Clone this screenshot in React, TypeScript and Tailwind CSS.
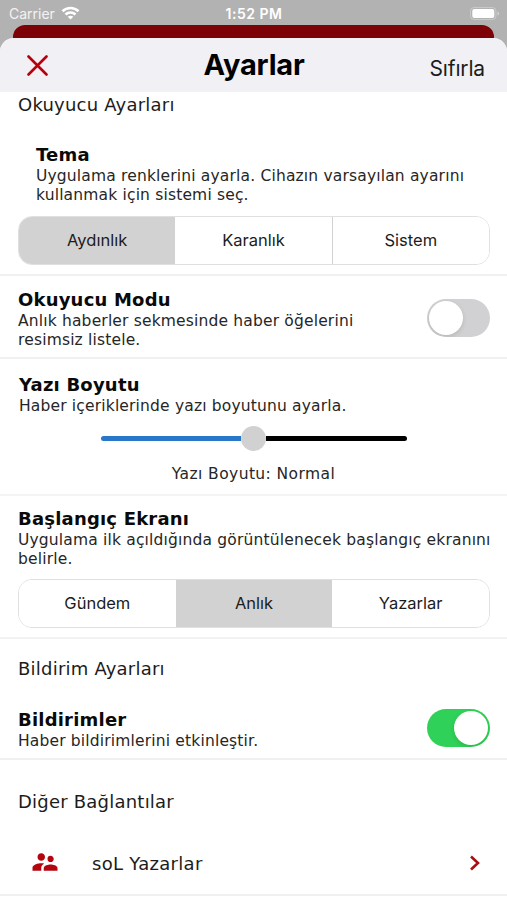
import React from "react";
import { MdSupervisorAccount } from "react-icons/md";

interface SegmentedProps {
  options: string[];
  selected: number;
}

function StatusBar() {
  return (
    <div className="flex h-[25px] items-center pt-[3px] text-white font-['Inter',sans-serif]">
      <div className="flex flex-1 items-center gap-[6px] pl-[9px]">
        <span className="text-[14px] leading-4 text-[#f2f2f2]">Carrier</span>
        <svg width="19" height="14" viewBox="0 0 18 14" fill="none" stroke="currentColor" strokeWidth="2.6" className="mb-[2px]">
          <path d="M1 5.2C5.5 0.9 12.5 0.9 17 5.2" />
          <path d="M4 8.5C6.8 5.8 11.2 5.8 14 8.5" />
          <path d="M6.2 10.7C7.8 9.3 10.2 9.3 11.8 10.7L9 13.6Z" fill="currentColor" stroke="none" />
        </svg>
      </div>
      <span className="mr-px text-[14px] font-semibold leading-4 tracking-[0.5px]">1:52 PM</span>
      <div className="flex flex-1 justify-end pb-[2px] pr-[7px]">
        <svg width="30" height="13" viewBox="0 0 30 13">
          <rect x="0.5" y="0.5" width="25.5" height="12" rx="3.5" fill="none" stroke="#fff" strokeOpacity="0.3" />
          <rect x="2.3" y="2" width="22" height="9" rx="2" fill="#fff" />
          <path d="M27.5 4.5v4c1-.3 1.700-1 1.700-2s-.7-1.700-1.700-2z" fill="#fff" fillOpacity="0.4" />
        </svg>
      </div>
    </div>
  );
}

function Segmented({ options, selected }: SegmentedProps) {
  return (
    <div className="flex h-[49px] w-[472px] overflow-hidden rounded-[14px] border border-[#e0e0e0] font-['Inter',sans-serif]">
      {options.map((option, index) => (
        <button
          key={option}
          className={
            "flex-1 text-[16.5px] text-[#1c1c1c] " +
            (index === selected ? "bg-[#d2d2d2]" : "bg-white") +
            (index > 0 && index - 1 !== selected && index !== selected ? " border-l border-[#d2d2d2]" : "")
          }
        >
          {option}
        </button>
      ))}
    </div>
  );
}

function Toggle({ on }: { on: boolean }) {
  return (
    <div
      className={
        "flex h-[38px] w-[63px] items-center overflow-hidden rounded-full px-[2px] " +
        (on ? "justify-end bg-[#30d158]" : "justify-start bg-[#d1d1d3]")
      }
    >
      <div className="size-[34px] rounded-full bg-white shadow-[0_2px_5px_rgba(0,0,0,0.12)]" />
    </div>
  );
}

function Title({ children }: { children: React.ReactNode }) {
  return (
    <h2 className="whitespace-nowrap text-[18px] font-bold leading-[22px] tracking-[0.2px] text-[#0a0a0a]">{children}</h2>
  );
}

function Description({ lines }: { lines: string[] }) {
  return (
    <p className="whitespace-nowrap pt-px text-[15.5px] leading-[19px] tracking-[0.17px] text-[#262626]">
      {lines.map((line) => (
        <span key={line} className="block">
          {line}
        </span>
      ))}
    </p>
  );
}

function Heading({ children }: { children: React.ReactNode }) {
  return (
    <h3 className="whitespace-nowrap text-[18px] leading-[22px] tracking-[0.22px] text-[#1c1c1c]">{children}</h3>
  );
}

export default function App() {
  return (
    <div className="h-[900px] w-[507px] overflow-hidden bg-[#b2b2b2] font-['DejaVu_Sans',sans-serif]">
      <StatusBar />
      {/* card of the screen behind the sheet */}
      <div className="mx-[13px] h-[13px] rounded-t-[12px] bg-[#7c0207]" />
      <div className="overflow-hidden rounded-t-[14px] bg-white">
        <header className="flex h-[54px] items-center bg-[#f1f0f5] font-['Inter',sans-serif]">
          <div className="flex-1 pl-[27px]">
            <svg width="21" height="21" viewBox="0 0 21 21" stroke="#b8000b" strokeWidth="2.6" strokeLinecap="round">
              <path d="M1.500 1.500 19.500 19.500M19.500 1.500 1.500 19.500" />
            </svg>
          </div>
          <h1 className="mr-[4px] text-[29px] font-bold leading-8 tracking-[-0.2px] text-black">Ayarlar</h1>
          <div className="flex-1 pr-[22px] pt-[8px] text-right text-[21px] leading-6 tracking-[-0.15px] text-[#1c1c1c]">
            Sıfırla
          </div>
        </header>

        <section className="h-[184px] border-b-2 border-[#f0f0f0] px-[18px] pt-[2px]">
          <Heading>Okuyucu Ayarları</Heading>
          <div className="mb-[11px] mt-[28px] pl-[18px]">
            <Title>Tema</Title>
            <Description lines={["Uygulama renklerini ayarla. Cihazın varsayılan ayarını", "kullanmak için sistemi seç."]} />
          </div>
          <Segmented options={["Aydınlık", "Karanlık", "Sistem"]} selected={0} />
        </section>

        <section className="flex h-[83px] justify-between border-b-2 border-[#f0f0f0] pl-[18px] pr-[17px]">
          <div className="pt-[13px]">
            <Title>Okuyucu Modu</Title>
            <Description lines={["Anlık haberler sekmesinde haber öğelerini", "resimsiz listele."]} />
          </div>
          <div className="pt-[23px]">
            <Toggle on={false} />
          </div>
        </section>

        <section className="h-[137px] border-b-2 border-[#f4f4f4] px-[19px] pt-[15px]">
          <Title>Yazı Boyutu</Title>
          <Description lines={["Haber içeriklerinde yazı boyutunu ayarla."]} />
          <div className="mx-auto mt-[10px] flex h-[25px] w-[306px] items-center">
            <div className="h-[5px] flex-1 rounded-l-full bg-[#2877c8]" />
            <div className="size-[25px] rounded-full bg-[#d1d1d1]" />
            <div className="h-[5px] flex-1 rounded-r-full bg-black" />
          </div>
          <div className="mt-[14px] whitespace-nowrap text-center text-[15.5px] leading-[19px] tracking-[0.42px] text-[#262626]">
            Yazı Boyutu: Normal
          </div>
        </section>

        <section className="h-[143px] border-b-2 border-[#f2f2f2] px-[18px] pt-[12px]">
          <Title>Başlangıç Ekranı</Title>
          <div className="mb-[10px]">
            <Description lines={["Uygulama ilk açıldığında görüntülenecek başlangıç ekranını", "belirle."]} />
          </div>
          <Segmented options={["Gündem", "Anlık", "Yazarlar"]} selected={1} />
        </section>

        <section className="h-[121px] border-b-2 border-[#f0f0f0] pl-[18px] pr-[17px] pt-[19px]">
          <Heading>Bildirim Ayarları</Heading>
          <div className="mt-[29px] flex items-start justify-between">
            <div>
              <Title>Bildirimler</Title>
              <Description lines={["Haber bildirimlerini etkinleştir."]} />
            </div>
            <Toggle on />
          </div>
        </section>

        <section className="h-[136px] border-b-2 border-[#f0f0f0] pl-[18px] pt-[31px]">
          <Heading>Diğer Bağlantılar</Heading>
          <div className="mt-[34px] flex h-[32px] items-center pl-[12px] pr-[26px]">
            <MdSupervisorAccount size={30} color="#b5060f" className="mb-[2px]" />
            <span className="ml-[32px] flex-1 pt-[2px] text-[18px] leading-[22px] tracking-[0.3px] text-[#1c1c1c]">
              soL Yazarlar
            </span>
            <svg width="12" height="16" viewBox="0 0 12 16" fill="none" stroke="#a80f14" strokeWidth="2.6">
              <path d="M2 1.500 9 8 2 14.500" />
            </svg>
          </div>
        </section>
        <div className="h-[4px]" />
      </div>
    </div>
  );
}
